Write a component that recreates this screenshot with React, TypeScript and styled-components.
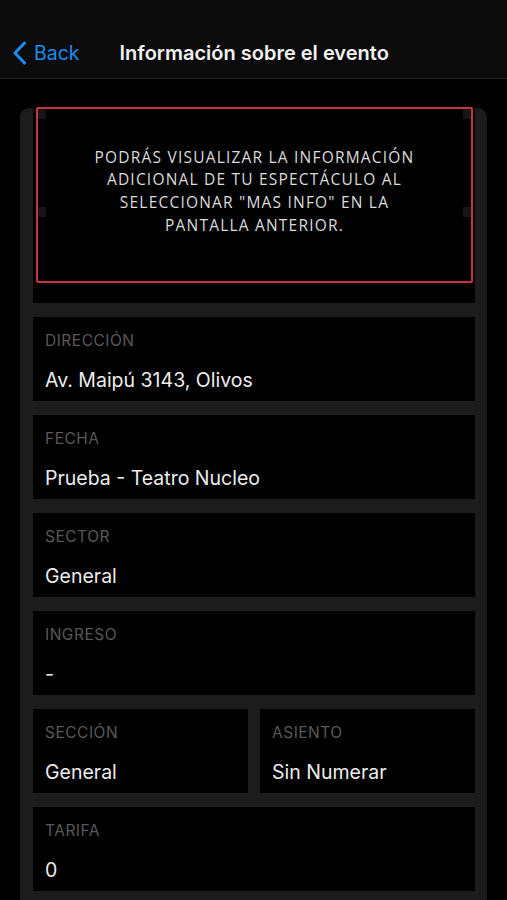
import React from "react";
import styled, { createGlobalStyle } from "styled-components";

const Global = createGlobalStyle`
  html, body { margin: 0; padding: 0; background: #000; overflow: hidden; }
  * { box-sizing: border-box; }
`;

const Screen = styled.div`
  width: 507px;
  height: 900px;
  overflow: hidden;
  background: #000;
  font-family: Inter, "Liberation Sans", sans-serif;
  display: flex;
  flex-direction: column;
`;

const NavBar = styled.header`
  height: 79px;
  flex: none;
  background: #0b0b0b;
  border-bottom: 1px solid #1e1e1e;
  display: flex;
  align-items: flex-end;
  padding: 0 0 11px 12px;
`;

const BackButton = styled.div`
  display: flex;
  align-items: center;
  gap: 7px;
  color: #1a8cf0;
  font-size: 19.5px;
  line-height: 24px;
  height: 28px;
`;

const Title = styled.h1`
  margin: 0 0 0 40px;
  color: #f2f2f2;
  font-size: 20px;
  font-weight: 600;
  line-height: 28px;
`;

const Content = styled.main`
  flex: 1;
  padding: 29px 20px 0 20px;
`;

const Frame = styled.section`
  background: #1c1c1c;
  border-radius: 9px 9px 0 0;
  padding: 0 12px 14px 13px;
  display: flex;
  flex-direction: column;
  gap: 14px;
`;

const ImageBlock = styled.div`
  background: #000;
  height: 195px;
  padding: 0 2px 20px 3px;
  display: flex;
`;

const NoticeBox = styled.div`
  position: relative;
  flex: 1;
  border: 2px solid #c9333d;
  border-radius: 2px;
  margin-top: -1px;
  display: flex;
  align-items: center;
  justify-content: center;
  padding: 0 10px 8px;
`;

const Handle = styled.span<{ $top: string; $left?: boolean }>`
  position: absolute;
  width: 8px;
  height: 10px;
  background: #161616;
  top: ${(p) => p.$top};
  ${(p) => (p.$left ? "left: 0;" : "right: 0;")}
`;

const NoticeText = styled.p`
  margin: 0;
  text-align: center;
  color: #dcdcdc;
  font-family: "Open Sans", "Liberation Sans", sans-serif;
  font-size: 15.5px;
  letter-spacing: 1.2px;
  line-height: 22.7px;
  text-transform: uppercase;
  white-space: nowrap;
`;

const Row = styled.div`
  display: grid;
  grid-template-columns: 1fr 1fr;
  gap: 12px;
`;

const Cell = styled.div`
  background: #000;
  height: 84px;
  padding: 13px 12px 0;
  display: flex;
  flex-direction: column;
`;

const Label = styled.div`
  color: #595959;
  font-size: 15.5px;
  letter-spacing: 0.5px;
  line-height: 22px;
  text-transform: uppercase;
`;

const Value = styled.div`
  margin-top: 16px;
  color: #ececec;
  font-size: 19.5px;
  line-height: 24px;
`;

const Chevron = () => (
  <svg width="15" height="24" viewBox="0 0 15 24" fill="none">
    <path
      d="M12.5 2 L3 12 L12.5 22"
      stroke="#1a8cf0"
      strokeWidth="3"
      strokeLinecap="round"
      strokeLinejoin="round"
    />
  </svg>
);

const Field = ({ label, value }: { label: string; value: string }) => (
  <Cell>
    <Label>{label}</Label>
    <Value>{value}</Value>
  </Cell>
);

export default function App() {
  return (
    <>
      <Global />
      <Screen>
        <NavBar>
          <BackButton>
            <Chevron />
            Back
          </BackButton>
          <Title>Información sobre el evento</Title>
        </NavBar>
        <Content>
          <Frame>
            <ImageBlock>
              <NoticeBox>
                <Handle $top="0" $left />
                <Handle $top="0" />
                <Handle $top="98px" $left />
                <Handle $top="98px" />
                <NoticeText>
                  Podrás visualizar la información
                  <br />
                  adicional de tu espectáculo al
                  <br />
                  seleccionar "mas info" en la
                  <br />
                  pantalla anterior.
                </NoticeText>
              </NoticeBox>
            </ImageBlock>
            <Field label="Dirección" value="Av. Maipú 3143, Olivos" />
            <Field label="Fecha" value="Prueba - Teatro Nucleo" />
            <Field label="Sector" value="General" />
            <Field label="Ingreso" value="-" />
            <Row>
              <Field label="Sección" value="General" />
              <Field label="Asiento" value="Sin Numerar" />
            </Row>
            <Field label="Tarifa" value="0" />
          </Frame>
        </Content>
      </Screen>
    </>
  );
}
